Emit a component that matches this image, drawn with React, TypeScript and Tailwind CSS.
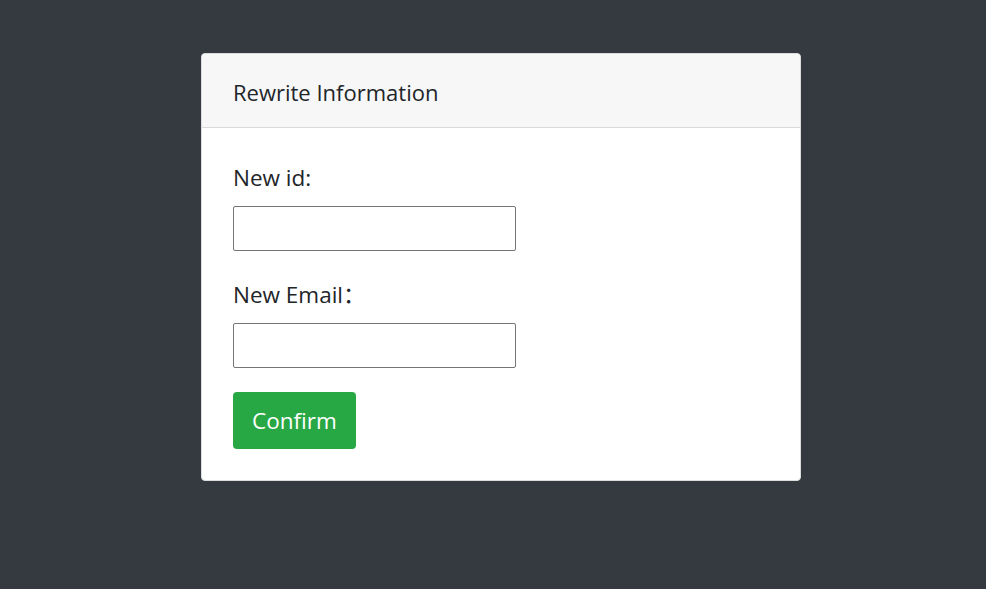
export default function App() {
  return (
    <div
      className="flex min-h-[589px] w-full justify-center bg-[#343a40] pt-[53px] pl-[16px]"
      style={{ fontFamily: '"Open Sans", "Noto Sans CJK SC", sans-serif' }}
    >
      <div className="h-fit w-[600px] overflow-hidden rounded-[4px] border border-[#dcdcdc] bg-white">
        {/* Header */}
        <div className="flex h-[74px] items-center border-b border-[#d9d9d9] bg-[#f7f7f7] px-[31px] pt-[4px]">
          <h1 className="text-[22px] text-[#212529]">Rewrite Information</h1>
        </div>

        {/* Body */}
        <div className="flex flex-col px-[31px] pt-[32px] pb-[31px]">
          <label className="text-[22.5px] leading-[36px] text-[#212529]">New id:</label>
          <input className="mt-[10px] h-[45px] w-[283px] rounded-[2px] border border-[#767676] bg-white outline-none" />

          <label className="mt-[26px] text-[22.5px] leading-[36px] text-[#212529]">New Email：</label>
          <input className="mt-[10px] h-[45px] w-[283px] rounded-[2px] border border-[#767676] bg-white outline-none" />

          <button className="mt-[24px] h-[57px] w-[123px] rounded-[4px] bg-[#28a745] text-[22.5px] text-white">
            Confirm
          </button>
        </div>
      </div>
    </div>
  );
}
